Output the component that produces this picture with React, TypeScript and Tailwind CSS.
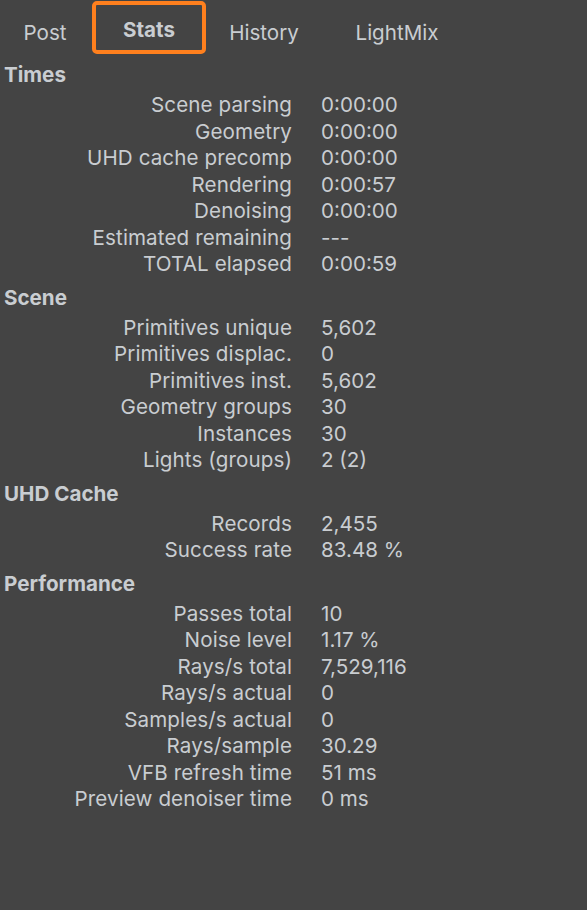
import React from "react";

type Row = [string, string];

const sections: { title: string; rows: Row[] }[] = [
  {
    title: "Times",
    rows: [
      ["Scene parsing", "0:00:00"],
      ["Geometry", "0:00:00"],
      ["UHD cache precomp", "0:00:00"],
      ["Rendering", "0:00:57"],
      ["Denoising", "0:00:00"],
      ["Estimated remaining", "---"],
      ["TOTAL elapsed", "0:00:59"],
    ],
  },
  {
    title: "Scene",
    rows: [
      ["Primitives unique", "5,602"],
      ["Primitives displac.", "0"],
      ["Primitives inst.", "5,602"],
      ["Geometry groups", "30"],
      ["Instances", "30"],
      ["Lights (groups)", "2 (2)"],
    ],
  },
  {
    title: "UHD Cache",
    rows: [
      ["Records", "2,455"],
      ["Success rate", "83.48 %"],
    ],
  },
  {
    title: "Performance",
    rows: [
      ["Passes total", "10"],
      ["Noise level", "1.17 %"],
      ["Rays/s total", "7,529,116"],
      ["Rays/s actual", "0"],
      ["Samples/s actual", "0"],
      ["Rays/sample", "30.29"],
      ["VFB refresh time", "51 ms"],
      ["Preview denoiser time", "0 ms"],
    ],
  },
];

function Tabs() {
  return (
    <div className="flex h-[54px] items-stretch pt-[1px] text-[20.6px]">
      <div className="flex w-[90px] items-center justify-center pt-[11px]">Post</div>
      <div className="ml-[2px] flex w-[114px] items-center justify-center rounded-[5px] border-[4px] border-[#ff801e] pt-[6px] font-bold">
        Stats
      </div>
      <div className="flex w-[116px] items-center justify-center pt-[11px]">History</div>
      <div className="flex w-[150px] items-center justify-center pt-[11px]">LightMix</div>
    </div>
  );
}

function Section({ title, rows }: { title: string; rows: Row[] }) {
  return (
    <div>
      <div className="px-[4px] pt-[8px] pb-[3px] text-[20.6px] leading-[26px] font-bold">{title}</div>
      {rows.map(([label, value]) => (
        <div key={label} className="flex h-[26.5px] items-center pt-[3px] text-[20.6px]">
          <div className="w-[292px] text-right tracking-[0.1px]">{label}</div>
          <div className="pl-[29px]">{value}</div>
        </div>
      ))}
    </div>
  );
}

export default function App() {
  return (
    <div
      className="h-[910px] w-[587px] overflow-hidden bg-[#444444] text-[#c9cdd1]"
      style={{ fontFamily: "Inter, 'Noto Sans', sans-serif" }}
    >
      <Tabs />
      {sections.map((s) => (
        <Section key={s.title} title={s.title} rows={s.rows} />
      ))}
    </div>
  );
}
